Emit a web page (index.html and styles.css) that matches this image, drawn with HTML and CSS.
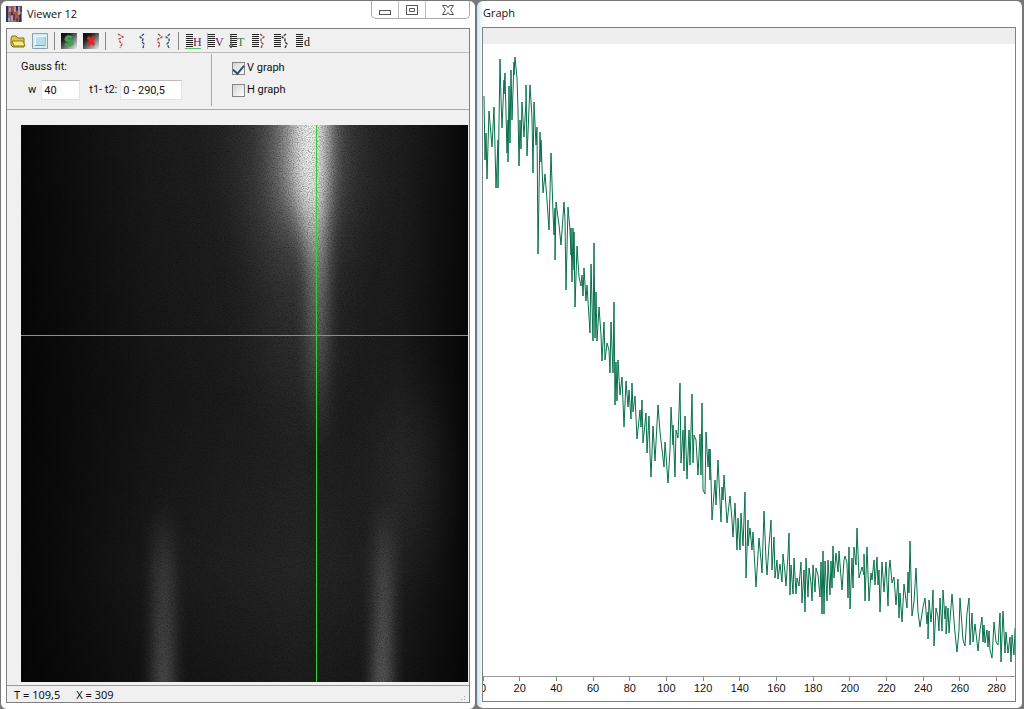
FILE: index.html
```html
<!DOCTYPE html>
<html lang="en">
<head>
<meta charset="utf-8">
<title>Viewer 12</title>
<link rel="stylesheet" href="styles.css">
</head>
<body>
<svg class="defs" aria-hidden="true">
  <defs>
    <g id="bars"><path d="M1 1.500h7M1 3.500h7M1 5.500h7M1 7.500h7M1 9.500h7M1 11.500h7M1 13.500h7" stroke="#222" fill="none"/></g>
    <linearGradient id="tile" x1="0" y1="0" x2="1" y2="1"><stop offset="0" stop-color="#000"/><stop offset=".3" stop-color="#222"/><stop offset="1" stop-color="#eee"/></linearGradient>
  </defs>
</svg>
<main class="desktop">
  <section class="window viewer">
    <header class="titlebar">
      <svg class="app-icon" viewBox="0 0 16 16"><path fill="#8b7183" d="M0 0h16v16H0z"/><path d="M1 0v16M6 1v8M11 0v5M14 8v8" stroke="#253764" stroke-width="2"/><path d="M3 9l3-7 2 5M8 15l2-9 3 7" stroke="#b94c32" stroke-width="2" fill="none"/><path d="M4 2v4M9 1v5M13 1v8M3 12v3M6 10v5" stroke="#c5d0e5"/><path d="M8 8v6M15 0v6M11 12v4" stroke="#351a29"/></svg>
      <h1 class="title">Viewer 12</h1>
      <div class="controls">
        <button class="control" aria-label="Minimize"><svg width="14" height="12" viewBox="0 0 14 12"><rect x="1.500" y="6.500" width="11" height="4" fill="#fff" stroke="#555"/></svg></button>
        <button class="control" aria-label="Maximize"><svg width="14" height="12" viewBox="0 0 14 12"><path d="M1.500 1.500h11v9h-11z" fill="#fff" stroke="#555"/><path d="M4.500 4.500h5v3h-5z" fill="none" stroke="#555"/></svg></button>
        <button class="control close" aria-label="Close"><svg width="14" height="12" viewBox="0 0 14 12"><path d="M1.500 1.500h4L7 3.500l1.500-2h4L9.500 6l3 4.500h-4L7 8.500l-1.500 2h-4l3-4.500z" fill="#fff" stroke="#555"/></svg></button>
      </div>
    </header>
    <div class="client">
      <div class="toolbar" role="toolbar" aria-label="Tools">
        <button class="tool" aria-label="Open"><svg viewBox="0 0 16 16"><path d="M1 5l1-2h4l2 2h6v9H3l-2-2z" fill="#d9c64b" stroke="#817016"/><path d="M2 8h11l2 5H4z" fill="#f6ea8b" stroke="#8c7a20"/></svg></button>
        <button class="tool" aria-label="Picture"><svg viewBox="0 0 16 16"><path d="M.5.500h15v15H.5z" fill="#d5edf5" stroke="#8f9fa6"/><path d="M3.500 3.500h9v9h-9z" fill="#b7e0ee" stroke="#f7ffff"/><path d="M3 12.500h10V4" fill="none" stroke="#6aa5bc"/></svg></button>
        <span class="separator"></span>
        <button class="tool" aria-label="Start"><svg viewBox="0 0 16 16"><path d="M0 0h16v16H0z" fill="url(#tile)"/><path d="M11 5Q6 2 5 6q1 2 5 2 3 3-1 4-3 0-5-1" fill="none" stroke="#36a849" stroke-width="3"/></svg></button>
        <button class="tool" aria-label="Delete"><svg viewBox="0 0 16 16"><path d="M0 0h16v16H0z" fill="url(#tile)"/><path d="M5 4l6 8M11 4l-6 8" stroke="#e5242a" stroke-width="3"/></svg></button>
        <span class="separator"></span>
        <button class="tool" aria-label="Right profile"><svg viewBox="0 0 16 16"><path d="M6 1l5 3-4 2 1 3 2 2-2 4" fill="none" stroke="#b04742" stroke-width="1.300" stroke-dasharray="3 1"/></svg></button>
        <button class="tool" aria-label="Left profile"><svg viewBox="0 0 16 16"><path d="M10 1L6 4l3 2-1 3 2 2-1 4" fill="none" stroke="#373a7c" stroke-width="1.300" stroke-dasharray="3 1"/></svg></button>
        <button class="tool" aria-label="Both profiles"><svg viewBox="0 0 16 16"><path d="M2 1l4 3-4 2v3l2 2-2 4" fill="none" stroke="#b04742" stroke-width="1.300" stroke-dasharray="3 1"/><path d="M14 1l-4 3 3 2v3l-2 2 2 4" fill="none" stroke="#34547b" stroke-width="1.300" stroke-dasharray="3 1"/></svg></button>
        <span class="separator"></span>
        <button class="tool" aria-label="H"><svg viewBox="0 0 16 16"><use href="#bars"/><path d="M0 15.500h16" stroke="#5bc060"/><text x="8" y="13" class="glyph purple">H</text></svg></button>
        <button class="tool" aria-label="V"><svg viewBox="0 0 16 16"><use href="#bars"/><path d="M.5 0v16" stroke="#66cf70"/><text x="8" y="13" class="glyph purple">V</text></svg></button>
        <button class="tool" aria-label="T"><svg viewBox="0 0 16 16"><use href="#bars"/><path d="M2 1v12M0 12l2 3 2-3" stroke="#47664c" fill="none"/><text x="8" y="13" class="glyph green">T</text></svg></button>
        <button class="tool" aria-label="Right profile data"><svg viewBox="0 0 16 16"><use href="#bars"/><path d="M9 1l4 3-3 2v3l2 2-2 4" fill="none" stroke="#a34349" stroke-width="1.300" stroke-dasharray="3 1"/></svg></button>
        <button class="tool" aria-label="Left profile data"><svg viewBox="0 0 16 16"><use href="#bars"/><path d="M13 1L9 4l3 2v3l2 2-2 4" fill="none" stroke="#333" stroke-width="1.300" stroke-dasharray="3 1"/></svg></button>
        <button class="tool" aria-label="d"><svg viewBox="0 0 16 16"><use href="#bars"/><text x="9" y="13" class="glyph">d</text></svg></button>
      </div>
      <form class="settings">
        <fieldset class="fit">
          <legend>Gauss fit:</legend>
          <div class="fields">
            <label for="w">w</label><input id="w" class="field short" value="40">
            <label for="range" class="range-label">t1- t2:</label><input id="range" class="field long" value="0 - 290,5">
          </div>
        </fieldset>
        <div class="checks">
          <label class="check"><input type="checkbox" checked>V graph</label>
          <label class="check"><input type="checkbox">H graph</label>
        </div>
      </form>
      <div class="image-area">
        <svg class="streak" viewBox="0 0 447 557" preserveAspectRatio="none" role="img" aria-label="Streak image">
          <defs>
            <linearGradient id="base"><stop offset="0" stop-color="#070707"/><stop offset=".3" stop-color="#1c1c1c"/><stop offset=".62" stop-color="#2a2a2a"/><stop offset=".85" stop-color="#202020"/><stop offset="1" stop-color="#080808"/></linearGradient>
            <linearGradient id="shade" x1="0" x2="0" y1="0" y2="1"><stop offset="0" stop-color="#000" stop-opacity="0"/><stop offset=".5" stop-color="#000" stop-opacity=".2"/><stop offset=".8" stop-color="#000" stop-opacity=".05"/><stop offset="1" stop-color="#000" stop-opacity=".3"/></linearGradient>
            <linearGradient id="beam" gradientUnits="userSpaceOnUse" x1="0" x2="0" y1="0" y2="330"><stop offset="0" stop-color="#fff" stop-opacity=".9"/><stop offset=".2" stop-color="#fff" stop-opacity=".8"/><stop offset=".4" stop-color="#fff" stop-opacity=".52"/><stop offset=".65" stop-color="#fff" stop-opacity=".3"/><stop offset=".8" stop-color="#fff" stop-opacity=".15"/><stop offset="1" stop-color="#fff" stop-opacity="0"/></linearGradient>
            <linearGradient id="rise" gradientUnits="userSpaceOnUse" x1="0" x2="0" y1="375" y2="557"><stop offset="0" stop-color="#fff" stop-opacity="0"/><stop offset=".4" stop-color="#fff" stop-opacity=".26"/><stop offset="1" stop-color="#fff" stop-opacity=".42"/></linearGradient>
            <filter id="soft" filterUnits="userSpaceOnUse" x="0" y="-80" width="447" height="720" color-interpolation-filters="sRGB"><feGaussianBlur stdDeviation="8 8"/></filter>
            <filter id="mid" filterUnits="userSpaceOnUse" x="0" y="-160" width="447" height="800" color-interpolation-filters="sRGB"><feGaussianBlur stdDeviation="15 22"/></filter>
            <filter id="wide" filterUnits="userSpaceOnUse" x="0" y="-160" width="447" height="800" color-interpolation-filters="sRGB"><feGaussianBlur stdDeviation="26 34"/></filter>
            <filter id="noise" x="0" y="0" width="100%" height="100%" color-interpolation-filters="sRGB"><feTurbulence type="fractalNoise" baseFrequency=".8" numOctaves="2" seed="7"/><feColorMatrix values="0 0 0 0 0 0 0 0 0 0 0 0 0 0 0 .8 0 0 0 -.32"/></filter>
          </defs>
          <path fill="url(#base)" d="M0 0h447v557H0z"/>
          <path fill="url(#shade)" d="M0 0h447v557H0z"/>
          <ellipse cx="280" cy="30" rx="48" ry="110" fill="#fff" opacity=".2" filter="url(#wide)"/>
          <ellipse cx="283" cy="15" rx="22" ry="80" fill="#fff" opacity=".6" filter="url(#mid)"/>
          <ellipse cx="275" cy="170" rx="32" ry="120" fill="#fff" opacity=".07" filter="url(#wide)"/>
          <path d="M276-60h28v150l1 240h-15l-2-180-12-100z" fill="url(#beam)" filter="url(#soft)"/>
          <ellipse cx="390" cy="345" rx="16" ry="90" fill="#fff" opacity=".14" filter="url(#wide)"/>
          <path d="M133 370h19v260h-19z" fill="url(#rise)" opacity=".65" filter="url(#soft)"/>
          <path d="M357 370h14l-4 260h-14z" fill="url(#rise)" filter="url(#soft)"/>
          <path d="M0 0h447v557H0z" filter="url(#noise)"/>
          <path d="M0 210h447v1H0zM295 0h1v557h-1z" fill="#28d332"/>
        </svg>
      </div>
      <footer class="status"><span>T = 109,5</span><span>X = 309</span><i class="grip"></i></footer>
    </div>
  </section>
  <section class="window graph">
    <header class="titlebar"><h2 class="title small">Graph</h2></header>
    <div class="client chart">
      <div class="strip"></div>
      <svg class="plot" viewBox="483 44 532 632" preserveAspectRatio="none" role="img" aria-label="Vertical profile graph">
        <polyline class="trace" points="484,96 485,160 486,133 487,179 489,111 492,147 494,107 496,188 498,140 498,188 500,59 501,99 502,128 504,80 504,94 505,73 507,153 508,120 508,162 509,86 510,143 511,70 512,120 514,62 514,75 515,57 517,78 518,110 519,166 520,120 521,149 522,102 524,137 526,100 526,85 527,156 530,85 532,118 533,173 534,102 536,145 537,127 538,254 540,132 541,162 541,140 543,193 545,174 547,200 549,230 551,153 553,212 554,235 555,208 555,260 556,202 559,225 561,245 564,202 565,220 566,290 568,207 570,230 571,255 571,228 572,282 573,228 574,270 574,232 575,307 577,246 579,277 581,286 582,275 583,296 584,268 586,301 587,285 590,333 591,264 593,341 594,243 595,338 596,292 597,341 599,307 601,335 602,361 604,322 605,360 607,343 609,350 610,373 611,322 613,373 614,302 615,405 616,362 617,401 618,360 620,395 622,377 624,427 626,381 628,407 629,390 631,419 632,383 633,412 635,396 637,439 640,410 641,427 642,400 643,443 646,413 647,453 649,416 650,454 651,477 653,426 655,461 658,405 660,432 664,467 665,442 668,483 670,450 671,407 673,445 673,425 675,477 676,430 678,438 680,383 681,463 683,430 684,471 685,416 687,479 689,430 690,465 692,394 693,463 694,435 696,440 698,475 700,434 701,475 702,403 703,490 705,494 706,432 708,467 709,449 710,480 710,449 711,478 712,520 715,480 716,505 718,460 721,522 722,487 723,500 724,475 727,523 730,496 732,520 733,537 735,503 737,550 738,518 740,550 741,513 743,546 745,492 746,578 748,520 748,546 750,528 752,550 753,532 756,587 759,538 761,560 762,573 764,511 766,560 767,575 769,545 771,520 772,570 774,537 775,578 777,560 778,579 780,564 782,582 783,554 785,573 786,586 788,555 789,533 790,595 791,565 793,594 794,558 796,594 797,578 799,586 801,562 802,603 804,570 805,612 806,558 808,597 809,568 811,583 812,601 813,565 815,592 816,568 818,575 820,597 821,562 822,614 823,551 824,614 825,561 827,601 828,560 830,595 831,561 832,588 833,546 834,578 836,553 838,572 839,551 842,590 844,560 845,556 847,563 848,598 849,547 850,609 852,558 853,588 854,547 856,565 857,528 859,578 862,567 864,575 864,554 865,601 867,547 869,601 871,573 872,580 874,560 875,585 877,557 878,585 879,570 880,612 882,562 884,592 886,562 888,606 889,570 890,560 892,583 894,577 896,605 898,579 899,618 900,593 902,622 904,584 906,600 907,608 908,572 909,593 910,541 912,616 914,602 916,568 918,612 920,627 923,607 925,598 927,624 928,612 928,639 929,600 931,622 932,610 933,590 934,646 936,608 938,617 939,631 940,598 942,631 943,590 945,619 946,606 946,634 948,608 949,633 952,594 955,633 957,652 959,630 960,598 963,640 965,646 967,613 969,598 970,645 972,613 973,642 975,624 977,642 978,651 980,630 982,617 983,642 984,625 985,643 987,630 988,647 989,631 990,650 992,658 994,622 996,642 998,645 1000,613 1001,662 1003,611 1005,653 1006,632 1008,653 1010,637 1011,662 1012,635 1014,655 1015,628"/>
      </svg>
      <div class="axis">
        <span class="origin"><b>0</b></span><span>20</span><span>40</span><span>60</span><span>80</span><span>100</span><span>120</span><span>140</span><span>160</span><span>180</span><span>200</span><span>220</span><span>240</span><span>260</span><span>280</span>
      </div>
    </div>
  </section>
</main>
</body>
</html>
```

FILE: styles.css
```css
* { box-sizing: border-box; }
body { margin: 0; background: #777; color: #111; font: 11px/14px "Liberation Sans", Arial, sans-serif; }
.defs { position: absolute; width: 0; height: 0; }
.desktop { display: grid; grid-template-columns: 476fr 548fr; height: 100vh; }
.window { display: flex; flex-direction: column; min-width: 0; background: #fff; border: 1px solid #777; border-radius: 7px; padding: 0 5px 6px; }
.graph { border-width: 1px 2px 2px 1px; background: linear-gradient(90deg, #c8e6ed, #fff 6px); padding-right: 6px; }
.titlebar { display: flex; align-items: center; height: 27px; flex: none; padding-bottom: 2px; }
.viewer .titlebar { gap: 5px; }
.graph .titlebar { height: 26px; }
.app-icon { width: 16px; height: 16px; }
.title { margin: 0; font: 11px/16px "Open Sans", "Noto Sans", sans-serif; }
.small { padding-left: 1px; }
.controls { display: flex; align-self: flex-start; margin-left: auto; border: 1px solid #aaa; border-top: 0; border-radius: 0 0 5px 5px; }
.control { width: 27px; height: 17px; padding: 0; border: 0; border-right: 1px solid #bbb; background: none; display: flex; align-items: center; justify-content: center; }
.control.close { width: 43px; border-right: 0; }
.client { flex: 1; min-height: 0; display: flex; flex-direction: column; border: 1px solid #808080; background: #f0f0f0; }
.toolbar { display: flex; align-items: center; height: 24px; flex: none; border-bottom: 1px solid #bbb; }
.tool { width: 22px; height: 22px; padding: 3px; border: 0; background: none; flex: none; }
.tool svg { display: block; width: 16px; height: 16px; overflow: visible; }
.glyph { font: 12px "Liberation Serif", serif; fill: #111; stroke: none; }
.purple { fill: #662064; }
.green { fill: #39784b; }
.separator { width: 7px; height: 18px; flex: none; background: linear-gradient(#888, #888) center / 1px 100% no-repeat; }
.settings { display: flex; height: 57px; flex: none; border-bottom: 1px solid #aaa; font-family: Roboto, "Liberation Sans", sans-serif; }
.fit { display: block; width: 205px; margin: 1px 0 3px; border: 0; border-right: 1px solid #aaa; padding: 6px 0 0 14px; min-width: 0; }
.fit legend { float: left; width: 100%; padding: 0; height: 20px; }
.fields { display: flex; align-items: center; clear: both; padding-left: 7px; }
.field { height: 20px; border: 1px solid #e4e4e4; border-top-color: #bbb; background: #fff; padding: 0 2px; font: inherit; color: inherit; }
.short { width: 39px; margin-left: 5px; }
.long { width: 62px; margin-left: 3px; }
.range-label { margin-left: 9px; }
.checks { display: flex; flex-direction: column; gap: 8px; padding: 8px 20px; }
.check { display: flex; align-items: center; gap: 2px; }
.check input { appearance: none; width: 13px; height: 13px; margin: 0; border: 1px solid #858585; background: linear-gradient(135deg, #d4d4d4, #fff); display: grid; place-items: center; }
.check input:checked::before { content: ""; width: 5px; height: 9px; border: solid #34477e; border-width: 0 2px 2px 0; transform: rotate(40deg); }
.image-area { flex: 1; min-height: 0; padding: 15px 1px 3px 14px; display: flex; }
.streak { display: block; width: 100%; height: 100%; background: #050505; }
.status { display: flex; gap: 16px; height: 17px; flex: none; border-top: 1px solid #999; padding: 0 2px 0 7px; font: 11px/17px "Noto Sans", sans-serif; }
.grip { width: 10px; height: 10px; margin-left: auto; align-self: flex-end; background: radial-gradient(circle, #aaa 1px, transparent 1px) 0 0 / 3px 3px; clip-path: polygon(100% 0, 100% 100%, 0 100%); }
.chart { background: #fff; }
.strip { height: 16px; flex: none; background: #eee; }
.plot { display: block; width: 100%; flex: 1; min-height: 0; }
.trace { fill: none; stroke: #08704a; stroke-width: 1px; vector-effect: non-scaling-stroke; }
.axis { display: flex; height: 25px; flex: none; border-top: 1px solid #999; overflow: hidden; font-size: 11px; }
.axis span { flex: 20 1 0; min-width: 0; display: flex; flex-direction: column; align-items: center; }
.axis span::before { content: ""; width: 1px; height: 4px; background: #888; }
.axis .origin { flex-grow: 10; align-items: flex-start; }
.axis b { margin-left: -3px; font-weight: normal; }
```
